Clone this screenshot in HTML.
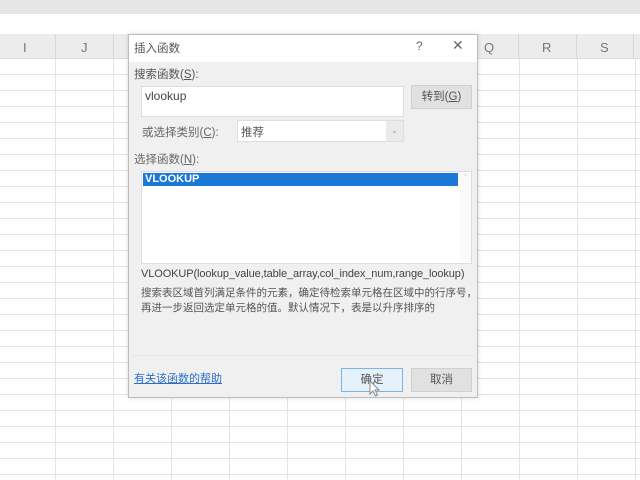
<!DOCTYPE html>
<html><head><meta charset="utf-8"><style>
*{margin:0;padding:0;box-sizing:border-box}
body{width:640px;height:480px;overflow:hidden;background:#fff;position:relative;font-family:"Liberation Sans","Noto Sans CJK SC",sans-serif;font-size:12px;color:#444}
.a{position:absolute}
.grid{position:absolute;left:0;top:58px;width:640px;height:422px;background-image:linear-gradient(#e4e4e4 1px,transparent 1px),linear-gradient(90deg,#e4e4e4 1px,transparent 1px);background-size:100% 16px,58px 100%;background-position:0 0,55px 0}
.hdr{position:absolute;left:0;top:34px;width:640px;height:25px;background:#ececec;border-bottom:1px solid #ddd}
.hdr span{position:absolute;top:6px;color:#777;font-size:13px}
.hl{position:absolute;top:34px;width:1px;height:25px;background:#d8d8d8}
.btn{position:absolute;background:#e1e1e1;border:1px solid #d0d0d0;text-align:center;color:#555}
</style></head><body>
<div class="a" style="left:0;top:0;width:640px;height:14px;background:#e6e6e6"></div>
<div class="grid"></div>
<div class="hdr"><span style="left:23px">I</span><span style="left:81px">J</span><span style="left:484px">Q</span><span style="left:542px">R</span><span style="left:600px">S</span></div>
<div class="hl" style="left:55px"></div><div class="hl" style="left:113px"></div><div class="hl" style="left:518px"></div><div class="hl" style="left:576px"></div><div class="hl" style="left:633px"></div>

<div class="a" style="left:128px;top:34px;width:350px;height:364px;background:#f0f0f0;border:1px solid #bdbdbd;box-shadow:0 0 4px rgba(0,0,0,.15)">
  <div class="a" style="left:0;top:0;width:348px;height:27px;background:#fff"></div>
  <div class="a" style="left:5px;top:5px;font-size:11.5px;color:#555">插入函数</div>
  <div class="a" style="left:287px;top:4px;color:#666">?</div>
  <div class="a" style="left:323px;top:2px;color:#666;font-size:14px">✕</div>
  <div class="a" style="left:5px;top:31px;color:#555;font-size:11.5px">搜索函数(<u>S</u>):</div>
  <div class="a" style="left:12px;top:51px;width:263px;height:31px;background:#fff;border:1px solid #ddd"></div>
  <div class="a" style="left:16px;top:54px;color:#444">vlookup</div>
  <div class="btn" style="left:282px;top:50px;width:61px;height:24px;line-height:22px;font-size:11.5px">转到(<u>G</u>)</div>
  <div class="a" style="left:13px;top:89px;color:#666;font-size:11.5px">或选择类别(<u>C</u>):</div>
  <div class="a" style="left:108px;top:85px;width:167px;height:22px;background:#fff;border:1px solid #ddd"></div>
  <div class="a" style="left:257px;top:86px;width:17px;height:20px;background:#eaeaea;color:#999;font-size:8px;text-align:center;line-height:20px">⌄</div>
  <div class="a" style="left:112px;top:89px;color:#555;font-size:11.5px">推荐</div>
  <div class="a" style="left:5px;top:116px;color:#666;font-size:11.5px">选择函数(<u>N</u>):</div>
  <div class="a" style="left:12px;top:136px;width:331px;height:93px;background:#fff;border:1px solid #ddd"></div>
  <div class="a" style="left:14px;top:138px;width:315px;height:13px;background:#1a78d6;color:#fff;font-weight:bold;font-size:11px;line-height:13px;padding-left:2px">VLOOKUP</div>
  <div class="a" style="left:331px;top:138px;width:11px;height:89px;background:#fafafa;color:#ccc;font-size:7px;text-align:center">⌃</div>
  <div class="a" style="left:12px;top:233px;font-size:11px;color:#444;white-space:nowrap;letter-spacing:-0.1px">VLOOKUP(lookup_value,table_array,col_index_num,range_lookup)</div>
  <div class="a" style="left:12px;top:251px;font-size:10.5px;line-height:15px;color:#555;white-space:nowrap">搜索表区域首列满足条件的元素，确定待检索单元格在区域中的行序号，<br>再进一步返回选定单元格的值。默认情况下，表是以升序排序的</div>
  <div class="a" style="left:2px;top:320px;width:344px;height:1px;background:#e6e6e6"></div>
  <div class="a" style="left:5px;top:335px;color:#2a6fc9;text-decoration:underline;font-size:11px">有关该函数的帮助</div>
  <div class="btn" style="left:212px;top:333px;width:62px;height:24px;line-height:22px;background:#e5f1fb;border-color:#7ab4e6;font-size:11.5px">确定</div>
  <div class="btn" style="left:282px;top:333px;width:61px;height:24px;line-height:22px;font-size:11.5px">取消</div>
  <svg class="a" style="left:240px;top:345px" width="12" height="18" viewBox="0 0 12 18"><path d="M1 1 L1 14 L4 11 L6.5 16 L8.5 15 L6 10 L10 10 Z" fill="#fff" stroke="#888" stroke-width="1"/></svg>
</div>
</body></html>
